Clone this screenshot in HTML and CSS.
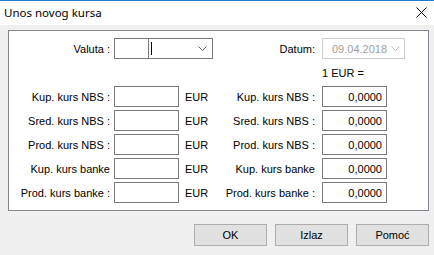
FILE: index.html
```html
<!DOCTYPE html>
<html lang="sr">
  <head>
    <meta charset="UTF-8" />
    <meta name="viewport" content="width=device-width, initial-scale=1.0" />
    <title>Unos novog kursa</title>
    <link rel="stylesheet" href="styles.css">
  </head>
  <body>
    <div class="window">
      <div class="title-bar">
        <span class="title">Unos novog kursa</span>
        <svg class="close" width="11" height="11" viewBox="0 0 11 11">
          <path d="M0.5 0.5 L10.5 10.5 M10.5 0.5 L0.5 10.5" stroke="#000" stroke-width="1" fill="none" />
        </svg>
      </div>

      <div class="group">
        <div class="grid">
          <label class="lbl">Valuta :</label>
          <div class="combo">
            <span class="combo-code"></span>
            <span class="combo-text"><span class="caret"></span></span>
            <svg class="chevron" width="9" height="5" viewBox="0 0 9 5">
              <path d="M0.5 0.5 L4.5 4.5 L8.5 0.5" stroke="#606060" fill="none" />
            </svg>
          </div>
          <span class="lbl right">Datum:</span>
          <div class="date">
            <span>09.04.2018</span>
            <svg class="chevron" width="9" height="5" viewBox="0 0 9 5">
              <path d="M0.5 0.5 L4.5 4.5 L8.5 0.5" stroke="#bfbfbf" fill="none" />
            </svg>
          </div>

          <span class="rate-title">1 EUR =</span>

          <span class="lbl">Kup. kurs NBS :</span>
          <input class="field" type="text" />
          <span class="cur">EUR</span>
          <span class="lbl right">Kup. kurs NBS :</span>
          <input class="field num" type="text" value="0,0000" />

          <span class="lbl">Sred. kurs NBS :</span>
          <input class="field" type="text" />
          <span class="cur">EUR</span>
          <span class="lbl right">Sred. kurs NBS :</span>
          <input class="field num" type="text" value="0,0000" />

          <span class="lbl">Prod. kurs NBS :</span>
          <input class="field" type="text" />
          <span class="cur">EUR</span>
          <span class="lbl right">Prod. kurs NBS :</span>
          <input class="field num" type="text" value="0,0000" />

          <span class="lbl">Kup. kurs banke</span>
          <input class="field" type="text" />
          <span class="cur">EUR</span>
          <span class="lbl right">Kup. kurs banke</span>
          <input class="field num" type="text" value="0,0000" />

          <span class="lbl">Prod. kurs banke :</span>
          <input class="field" type="text" />
          <span class="cur">EUR</span>
          <span class="lbl right">Prod. kurs banke :</span>
          <input class="field num" type="text" value="0,0000" />
        </div>
      </div>

      <div class="buttons">
        <button class="btn">OK</button>
        <button class="btn">Izlaz</button>
        <button class="btn">Pomoć</button>
      </div>
    </div>
  </body>
</html>
```

FILE: styles.css
```css
body {
  margin: 0;
  font-family: "Liberation Sans", Arial, sans-serif;
  font-size: 11px;
  color: #000;
  background-color: #f0f0f0;
}
.window {
  width: 434px;
  height: 255px;
  background-color: #f0f0f0;
}
.title-bar {
  height: 24px;
  border-top: 1px solid #1c7fd4;
  background-color: #fff;
  display: flex;
  align-items: center;
  justify-content: space-between;
  padding: 0 7px 0 4px;
}
.title {
  font-family: "Noto Sans", sans-serif;
  font-size: 11.5px;
  margin-top: -1px;
}
.close {
  margin-top: -2px;
}
.group {
  margin: 5px 5px 0 8px;
  border: 1px solid #828790;
  background-color: #fff;
  padding-top: 7px;
  box-sizing: border-box;
  height: 181px;
}
.grid {
  display: grid;
  grid-template-columns: 105px 65px 40px 103px 65px;
  grid-auto-rows: 21px;
  row-gap: 3px;
  align-items: center;
}
.lbl {
  text-align: right;
  padding-right: 4px;
  white-space: nowrap;
}
.lbl.right {
  padding-right: 7px;
}
.combo {
  grid-column: 2 / 4;
  width: 99px;
  height: 21px;
  box-sizing: border-box;
  border: 1px solid #7a7a7a;
  display: flex;
  align-items: center;
}
.combo-code {
  width: 33px;
  height: 100%;
  border-right: 1px solid #7a7a7a;
}
.combo-text {
  flex: 1;
  height: 100%;
  display: flex;
  align-items: center;
  padding-left: 2px;
}
.caret {
  width: 1px;
  height: 13px;
  background-color: #000;
}
.combo .chevron {
  margin-right: 5px;
}
.date {
  width: 83px;
  height: 21px;
  box-sizing: border-box;
  border: 1px solid #cccccc;
  color: #a0a0a0;
  display: flex;
  align-items: center;
  justify-content: space-between;
  padding: 0 4px 0 9px;
}
.rate-title {
  grid-column: 5;
}
.field {
  width: 65px;
  height: 21px;
  box-sizing: border-box;
  border: 1px solid #7a7a7a;
  margin: 0;
  padding: 0 4px;
  font-family: inherit;
  font-size: 11px;
  outline: none;
}
.field.num {
  text-align: right;
}
.cur {
  padding-left: 6px;
}
.buttons {
  display: flex;
  justify-content: flex-end;
  gap: 8px;
  margin: 13px 5px 0 0;
}
.btn {
  width: 73px;
  height: 22px;
  border: 1px solid #adadad;
  background-color: #e1e1e1;
  font-family: inherit;
  font-size: 11px;
  font-weight: normal;
  color: #000;
  padding: 0;
}
```
